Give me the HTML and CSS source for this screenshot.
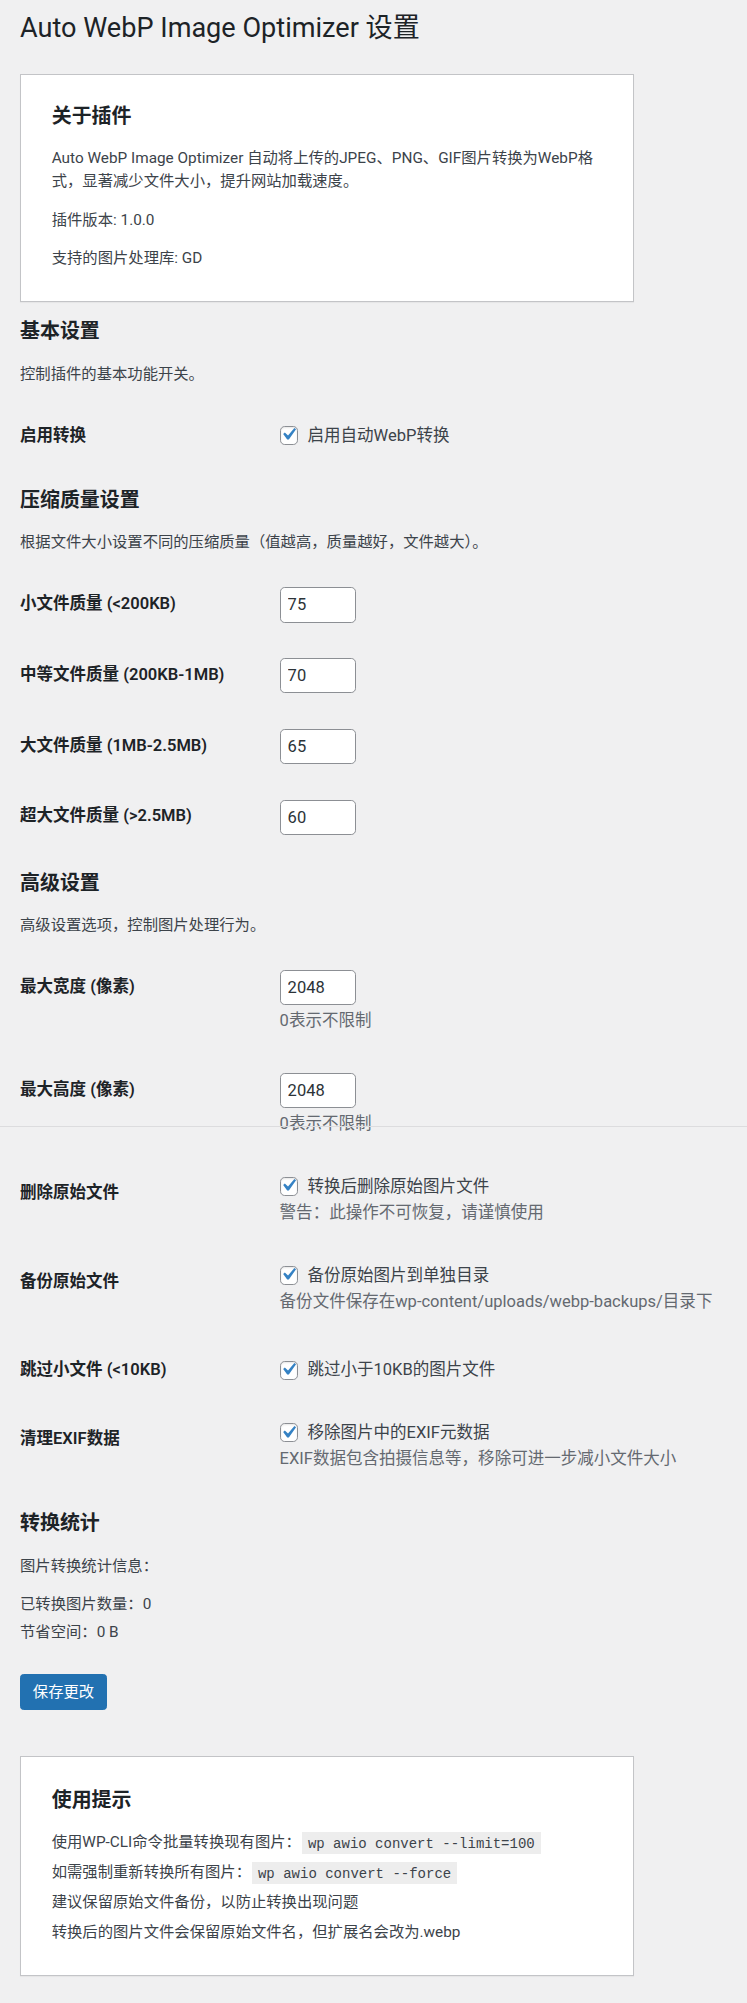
FILE: index.html
```html
<!DOCTYPE html>
<html lang="zh-CN">
<head>
<meta charset="utf-8">
<title>Auto WebP Image Optimizer 设置</title>
<link rel="stylesheet" href="styles.css">
</head>
<body>
<div class="wrap">
  <h1 class="page-title">Auto WebP Image Optimizer 设置</h1>

  <div class="card">
    <h2 class="title">关于插件</h2>
    <p>Auto WebP Image Optimizer 自动将上传的JPEG、PNG、GIF图片转换为WebP格式，显著减少文件大小，提升网站加载速度。</p>
    <p>插件版本: 1.0.0</p>
    <p>支持的图片处理库: GD</p>
  </div>

  <form class="settings-form">
    <h2 class="section-title">基本设置</h2>
    <p class="section-desc">控制插件的基本功能开关。</p>
    <table class="form-table">
      <tr>
        <th>启用转换</th>
        <td>
          <label class="cb-label"><input type="checkbox" class="cb-input" checked><span class="cb-box"><svg viewBox="0 0 20 20"><path d="M14.83 4.89l1.34.94-5.81 8.38H9.02L5.78 9.67l1.34-1.25 2.57 2.4z"/></svg></span>启用自动WebP转换</label>
        </td>
      </tr>
    </table>

    <h2 class="section-title">压缩质量设置</h2>
    <p class="section-desc">根据文件大小设置不同的压缩质量（值越高，质量越好，文件越大）。</p>
    <table class="form-table">
      <tr>
        <th>小文件质量 (&lt;200KB)</th>
        <td><input type="number" class="num-input" value="75"></td>
      </tr>
      <tr>
        <th>中等文件质量 (200KB-1MB)</th>
        <td><input type="number" class="num-input" value="70"></td>
      </tr>
      <tr>
        <th>大文件质量 (1MB-2.5MB)</th>
        <td><input type="number" class="num-input" value="65"></td>
      </tr>
      <tr>
        <th>超大文件质量 (&gt;2.5MB)</th>
        <td><input type="number" class="num-input" value="60"></td>
      </tr>
    </table>

    <h2 class="section-title">高级设置</h2>
    <p class="section-desc">高级设置选项，控制图片处理行为。</p>
    <table class="form-table">
      <tr>
        <th>最大宽度 (像素)</th>
        <td>
          <input type="number" class="num-input" value="2048">
          <p class="description">0表示不限制</p>
        </td>
      </tr>
      <tr>
        <th>最大高度 (像素)</th>
        <td>
          <input type="number" class="num-input" value="2048">
          <p class="description">0表示不限制</p>
        </td>
      </tr>
      <tr>
        <th>删除原始文件</th>
        <td>
          <label class="cb-label"><input type="checkbox" class="cb-input" checked><span class="cb-box"><svg viewBox="0 0 20 20"><path d="M14.83 4.89l1.34.94-5.81 8.38H9.02L5.78 9.67l1.34-1.25 2.57 2.4z"/></svg></span>转换后删除原始图片文件</label>
          <p class="description">警告：此操作不可恢复，请谨慎使用</p>
        </td>
      </tr>
      <tr>
        <th>备份原始文件</th>
        <td>
          <label class="cb-label"><input type="checkbox" class="cb-input" checked><span class="cb-box"><svg viewBox="0 0 20 20"><path d="M14.83 4.89l1.34.94-5.81 8.38H9.02L5.78 9.67l1.34-1.25 2.57 2.4z"/></svg></span>备份原始图片到单独目录</label>
          <p class="description">备份文件保存在wp-content/uploads/webp-backups/目录下</p>
        </td>
      </tr>
      <tr>
        <th>跳过小文件 (&lt;10KB)</th>
        <td>
          <label class="cb-label"><input type="checkbox" class="cb-input" checked><span class="cb-box"><svg viewBox="0 0 20 20"><path d="M14.83 4.89l1.34.94-5.81 8.38H9.02L5.78 9.67l1.34-1.25 2.57 2.4z"/></svg></span>跳过小于10KB的图片文件</label>
        </td>
      </tr>
      <tr>
        <th>清理EXIF数据</th>
        <td>
          <label class="cb-label"><input type="checkbox" class="cb-input" checked><span class="cb-box"><svg viewBox="0 0 20 20"><path d="M14.83 4.89l1.34.94-5.81 8.38H9.02L5.78 9.67l1.34-1.25 2.57 2.4z"/></svg></span>移除图片中的EXIF元数据</label>
          <p class="description">EXIF数据包含拍摄信息等，移除可进一步减小文件大小</p>
        </td>
      </tr>
    </table>

    <h2 class="section-title">转换统计</h2>
    <p class="section-desc">图片转换统计信息：</p>
    <ul class="stats">
      <li>已转换图片数量：0</li>
      <li>节省空间：0 B</li>
    </ul>

    <p class="submit"><button type="button" class="button-primary">保存更改</button></p>
  </form>

  <div class="card tips">
    <h2 class="title">使用提示</h2>
    <ul class="tips-list">
      <li>使用WP-CLI命令批量转换现有图片：<code>wp awio convert --limit=100</code></li>
      <li>如需强制重新转换所有图片：<code>wp awio convert --force</code></li>
      <li>建议保留原始文件备份，以防止转换出现问题</li>
      <li>转换后的图片文件会保留原始文件名，但扩展名会改为.webp</li>
    </ul>
  </div>
</div>
<div class="scroll-line"></div>
</body>
</html>
```

FILE: styles.css
```css
html, body {
  margin: 0;
  padding: 0;
}

body {
  position: relative;
  background: #f0f0f1;
  color: #3c434a;
  font-family: Roboto, "Noto Sans CJK SC", sans-serif;
  font-size: 15.34px;
  line-height: 21.5px;
  min-height: 2003px;
}

.wrap {
  padding: 0 20px;
}

.page-title {
  margin: 0;
  padding: 10.6px 0 4.7px;
  font-size: 27.1px;
  font-weight: 400;
  line-height: 1.3;
  color: #1d2327;
}

.card {
  box-sizing: border-box;
  max-width: 614px;
  margin-top: 23.6px;
  padding: 10.7px 30.7px 15.3px;
  background: #fff;
  border: 1px solid #c3c4c7;
  box-shadow: 0 1px 1px rgba(0, 0, 0, 0.04);
}

.card .title,
.section-title {
  margin: 19.94px 0;
  font-size: 19.94px;
  font-weight: 600;
  line-height: 21.5px;
  color: #1d2327;
}

.card p,
.section-desc {
  margin: 15.34px 0;
  font-size: 15.34px;
  line-height: 1.5;
}

.form-table {
  width: 100%;
  margin-top: 7.7px;
  border-collapse: collapse;
}

.form-table th {
  width: 236px;
  padding: 23.6px 11.8px 23.6px 0;
  text-align: left;
  vertical-align: top;
  font-size: 16.52px;
  font-weight: 600;
  line-height: 1.3;
  color: #1d2327;
}

.form-table td {
  padding: 17.7px 11.8px;
  vertical-align: middle;
  font-size: 16.52px;
  line-height: 1.3;
  color: #3c434a;
}

.num-input {
  box-sizing: border-box;
  display: block;
  width: 76.7px;
  height: 35.4px;
  margin: 0;
  padding: 0 7px;
  border: 1px solid #8c8f94;
  border-radius: 4.7px;
  background: #fff;
  color: #2c3338;
  font-family: Roboto, "Noto Sans CJK SC", sans-serif;
  font-size: 16.52px;
  line-height: 2;
  -moz-appearance: textfield;
}

.num-input::-webkit-inner-spin-button,
.num-input::-webkit-outer-spin-button {
  -webkit-appearance: none;
  margin: 0;
}

.description {
  margin: 4.7px 0 5.9px;
  color: #646970;
  font-size: 16.52px;
  line-height: 1.3;
}

.cb-label {
  display: flex;
  align-items: center;
  position: relative;
  height: 21.5px;
}

.cb-input {
  position: absolute;
  opacity: 0;
  width: 1px;
  height: 1px;
  margin: 0;
}

.cb-box {
  box-sizing: border-box;
  display: inline-flex;
  align-items: center;
  justify-content: center;
  flex: none;
  width: 18.9px;
  height: 18.9px;
  margin-right: 9px;
  border: 1px solid #8c8f94;
  border-radius: 4.7px;
  background: #fff;
  box-shadow: inset 0 1px 2px rgba(0, 0, 0, 0.1);
  overflow: visible;
}

.cb-box svg {
  width: 24.8px;
  height: 24.8px;
  flex: none;
  margin: -2px 0 0 -1px;
  fill: #3582c4;
}

.stats {
  list-style: none;
  margin: 15.34px 0;
  padding: 0;
  font-size: 15.34px;
  line-height: 1.5;
}

.stats li {
  margin-bottom: 5px;
}

.submit {
  margin: 20px 0 15.34px;
  padding-top: 10px;
  line-height: 1;
}

.button-primary {
  box-sizing: border-box;
  height: 36px;
  padding: 0 11.8px;
  border: 1px solid #2271b1;
  border-radius: 3.5px;
  background: #2271b1;
  color: #fff;
  font-family: Roboto, "Noto Sans CJK SC", sans-serif;
  font-size: 15.34px;
  line-height: 34px;
  vertical-align: top;
  cursor: pointer;
}

.card.tips {
  margin-top: 46px;
}

.card.tips .title {
  margin-top: 22px;
}

.tips-list {
  list-style: none;
  margin: 15.34px 0;
  padding: 0;
  font-size: 15.34px;
  line-height: 1.5;
}

.tips-list li {
  margin-bottom: 7px;
}

code {
  padding: 3.5px 6px 2.4px;
  margin: 0 1px;
  background: rgba(0, 0, 0, 0.07);
  font-family: "Liberation Mono", monospace;
  font-size: 14px;
  color: #3c434a;
}

.scroll-line {
  position: absolute;
  top: 1126px;
  left: 0;
  right: 0;
  height: 1px;
  background: #dcdcde;
}
```
